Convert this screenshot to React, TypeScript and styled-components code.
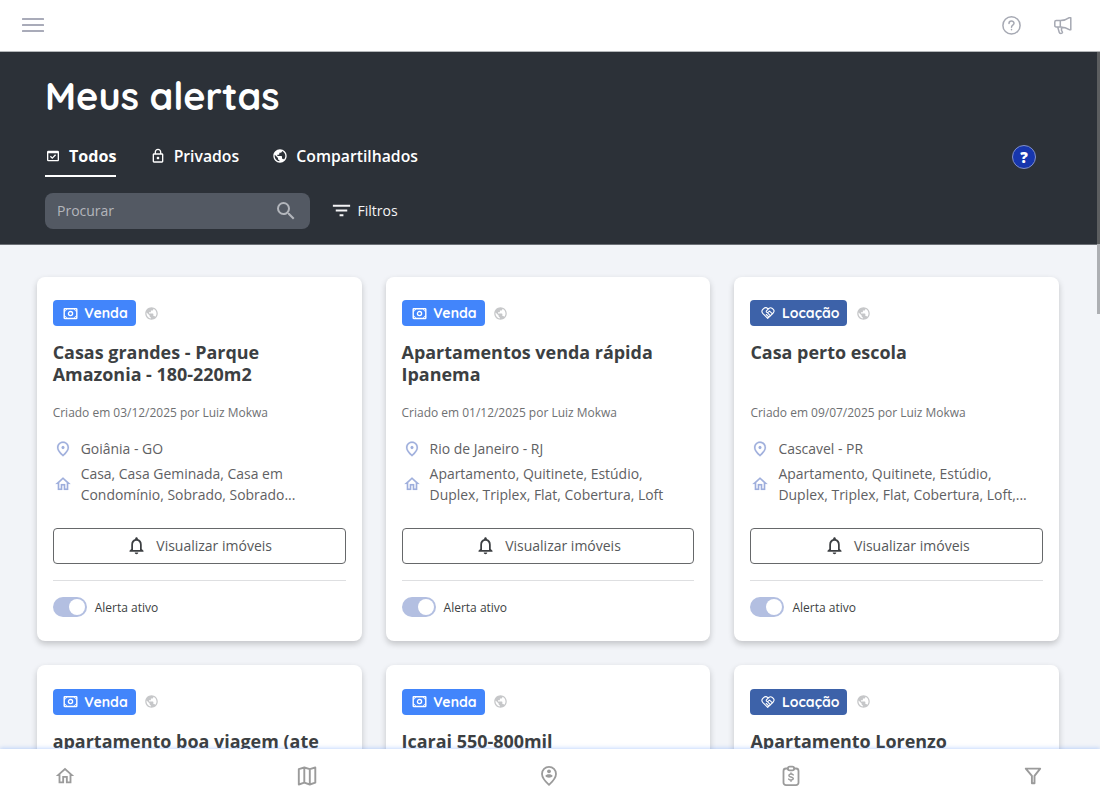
import React from "react";
import styled, { createGlobalStyle } from "styled-components";
import {
  MdFilterList,
  MdNotificationsNone,
  MdOutlineDomainVerification,
  MdOutlineHome,
  MdOutlineLock,
  MdOutlinePlace,
  MdPublic,
  MdSearch,
} from "react-icons/md";

const rounded = `Quicksand, Lato, "Liberation Sans", sans-serif`;

const GlobalStyle = createGlobalStyle`
  * { box-sizing: border-box; }
  body {
    margin: 0;
    overflow: hidden;
    background: #f2f4f8;
    font-family: "Open Sans", "Noto Sans", sans-serif;
    color: #3c3f42;
  }
  button, input { font: inherit; }
  svg { display: block; flex: none; }
  svg path[fill="none"] { stroke: none; }
`;

const Page = styled.div`
  display: grid;
  grid-template-rows: 52px 1fr 51px;
  height: 800px;
  width: 1100px;
`;

const TopBar = styled.header`
  display: flex;
  align-items: center;
  justify-content: space-between;
  padding: 0 27px 1px 22px;
  background: #fff;
  border-bottom: 1px solid #b4b7b9;
  color: #a6a9b3;
`;

const TopActions = styled.div`
  display: flex;
  align-items: center;
  gap: 32px;
`;

const Burger = styled.div`
  display: flex;
  flex-direction: column;
  gap: 4px;
  span {
    width: 22px;
    height: 2px;
    border-radius: 0.5px;
    background: #a9abb9;
  }
`;

const Scroller = styled.main`
  display: grid;
  grid-template-columns: 1097px 3px;
  min-height: 0;
  overflow: hidden;
`;

const Content = styled.div`
  min-width: 0;
`;

const ScrollTrack = styled.div`
  background: linear-gradient(#555759 192px, #f2f4f8 192px);
`;

const ScrollThumb = styled.div`
  height: 262px;
  background: linear-gradient(#5c5e60 192px, #adafb3 192px);
`;

const Hero = styled.section`
  height: 193px;
  padding: 22px 61px 0 45px;
  background: #2c3138;
  color: #fff;
  border-bottom: 1px solid #6c7076;
`;

const Title = styled.h1`
  margin: 0;
  font: 700 37.9px/44px ${rounded};
`;

const TabRow = styled.div`
  display: flex;
  justify-content: space-between;
  margin-top: 18px;
  height: 41px;
`;

const Tabs = styled.nav`
  display: flex;
  gap: 33.2px;
`;

const Tab = styled.div<{ $active?: boolean }>`
  display: flex;
  align-items: center;
  gap: 8px;
  height: 41px;
  font-size: ${(p) => (p.$active ? 16.1 : 15.75)}px;
  font-weight: ${(p) => (p.$active ? 700 : 600)};
  border-bottom: 2px solid ${(p) => (p.$active ? "#fff" : "transparent")};
`;

const HelpBadge = styled.button`
  width: 24px;
  height: 24px;
  margin-top: 9px;
  padding: 0;
  border: 1px solid #8290c6;
  border-radius: 50%;
  background: #1736ad;
  color: #fff;
  font-size: 15px;
  font-weight: 800;
  line-height: 20px;
`;

const Tools = styled.div`
  display: flex;
  align-items: center;
  gap: 20px;
  margin-top: 16px;
`;

const SearchBox = styled.div`
  display: flex;
  align-items: center;
  justify-content: space-between;
  width: 265px;
  height: 36px;
  padding: 0 12px 1px;
  border-radius: 8px;
  background: #535963;
  color: #b3b6bc;
  font-size: 14px;
`;

const FilterButton = styled.div`
  display: flex;
  align-items: center;
  gap: 4.5px;
  padding-bottom: 1px;
  color: #f4f4f5;
  font-size: 14px;
`;

const Grid = styled.section`
  display: grid;
  grid-template-columns: repeat(3, 1fr);
  gap: 24.2px 24px;
  padding: 31.6px 37.7px 0 36.7px;
`;

const Card = styled.article`
  display: flex;
  flex-direction: column;
  height: 364.2px;
  padding: 23.6px 16px 0;
  border-radius: 8px;
  background: #fff;
  box-shadow: 0 3px 6px rgba(0, 0, 0, 0.2);
`;

const TagRow = styled.div`
  display: flex;
  align-items: center;
  gap: 8.5px;
  height: 26px;
  color: #c6c7c9;
`;

const Tag = styled.span<{ $rent?: boolean }>`
  display: flex;
  align-items: center;
  justify-content: space-between;
  width: ${(p) => (p.$rent ? 97 : 83)}px;
  height: 26px;
  padding: 0 8px 0 ${(p) => (p.$rent ? 11 : 10.5)}px;
  border-radius: 4px;
  background: ${(p) => (p.$rent ? "#3d62a9" : "#4285fb")};
  color: #fff;
  font: 700 14px/26px ${rounded};
`;

const CardTitle = styled.h2`
  height: 44px;
  margin: 15px 0 0;
  font-size: 17.95px;
  font-weight: 700;
  line-height: 22px;
`;

const Created = styled.p`
  margin: 18.4px 0 0;
  color: #6e7072;
  font-size: 11.97px;
  line-height: 18px;
`;

const Detail = styled.div<{ $first?: boolean }>`
  display: flex;
  align-items: center;
  gap: 9px;
  margin-top: ${(p) => (p.$first ? 16.6 : 4)}px;
  color: #5f6163;
  font-size: 13.95px;
  line-height: 21px;
  white-space: pre-line;
  svg { color: #9fafdc; margin-left: 1px; stroke: currentColor; stroke-width: 0.2px; }
`;

const ViewButton = styled.button`
  display: flex;
  align-items: center;
  justify-content: center;
  gap: 9px;
  height: 36px;
  margin: 23px 0 16px;
  padding: 0 0 0.5px;
  border: 1px solid #66686a;
  border-radius: 4px;
  background: #fff;
  color: #56585a;
  font-size: 14px;
  svg { color: #3c3f42; }
`;

const Footer = styled.div`
  display: flex;
  align-items: center;
  gap: 8px;
  padding-top: 16px;
  border-top: 1px solid #dedfe1;
  font-size: 12px;
`;

const Toggle = styled.span`
  display: flex;
  justify-content: flex-end;
  width: 34px;
  height: 20px;
  padding: 2px;
  border-radius: 10px;
  background: #b3bfe1;
  &::after {
    content: "";
    width: 16px;
    height: 16px;
    border-radius: 50%;
    background: #fff;
  }
`;

const BottomBar = styled.nav`
  position: relative;
  display: flex;
  align-items: center;
  justify-content: space-between;
  padding: 2px 56px 0 54px;
  background: #fff;
  color: #9b9b9b;
  box-shadow: 0 -1px 4px rgba(66, 133, 251, 0.3);
`;

const line = {
  fill: "none",
  stroke: "currentColor",
  strokeLinecap: "round",
  strokeLinejoin: "round",
} as const;

const HelpIcon = () => (
  <svg width="20" height="20" viewBox="0 0 20 20" {...line} strokeWidth="1.5">
    <circle cx="10.5" cy="10.4" r="8.6" />
    <path d="M8 8.4c0-3.2 5-3.1 5-.2 0 2-2.5 1.9-2.5 4M10.5 14.6v.1" />
  </svg>
);

const MegaphoneIcon = () => (
  <svg width="20" height="20" viewBox="0 0 20 20" {...line} strokeWidth="1.5">
    <path d="M3.2 5.6h4.300c3.500 0 6.200-1 8.800-2.900h1.500v12h-1.500c-2.600-1.900-5.300-2.800-8.800-2.800H3.200c-.9 0-1.400-.6-1.400-1.500V7.100c0-.9.500-1.500 1.400-1.500zM7.300 5.600v6.300M4.700 12l1.500 5.300c.4 1.500 2.900 1.300 3.300.2.200-.7-1-1.400-1-2.300V12" />
  </svg>
);

const CashIcon = () => (
  <svg width="15" height="15" viewBox="0 0 15 15" {...line} strokeWidth="1.4">
    <rect x="1.2" y="2.7" width="12.6" height="9.8" rx="0.5" />
    <circle cx="7.5" cy="7.6" r="2.1" strokeWidth="1.3" />
    <path d="M1.5 5.200c1.200-.2 1.900-.9 2.100-2.100M13.500 5.200c-1.200-.2-1.900-.9-2.100-2.100M1.500 10c1.200.2 1.900.9 2.100 2.100M13.500 10c-1.200.2-1.900.9-2.100 2.100" strokeWidth="1" />
  </svg>
);

const DealIcon = () => (
  <svg width="14" height="14" viewBox="0 0 14 14" {...line} strokeWidth="1.1">
    <path d="M7 2.900C5.700 1.500 3.900 1.400 2.600 2.600L1.600 3.700C.6 5 .7 6.200 1.700 7.300L6.700 12.300 12.200 7c1.100-1.200 1.100-2.500.1-3.600l-1-.9C10.100 1.400 8.900 1.600 7.800 2.500L5.400 4.900c-.6 1.500.9 2 1.800 1.300l1.300-1.100 3 2.700M6.900 7.200l2.600 2.600M5.300 8.500l2.400 2.400" />
  </svg>
);

const MapIcon = () => (
  <svg width="22" height="22" viewBox="0 0 22 22" {...line} strokeWidth="1.9">
    <path d="M2.800 4.100l5.500-1.600 5.500 1.600 5.500-1.600v15.200l-5.500 1.800-5.500-1.800-5.500 1.800zM8.300 2.500v15.200M13.800 4.100v15.400" />
  </svg>
);

const PersonPinIcon = () => (
  <svg width="22" height="22" viewBox="0 0 22 22" {...line} strokeWidth="1.8">
    <path d="M11 19.800C6.600 15.700 4 12.500 4 8.900a7 7 0 0 1 14 0c0 3.600-2.600 6.800-7 10.900z" />
    <circle cx="11" cy="6.300" r="1.900" fill="currentColor" stroke="none" />
    <path d="M7.300 11c.8-2.200 6.600-2.200 7.400 0-1.400 2.200-6 2.200-7.400 0z" fill="currentColor" stroke="none" />
  </svg>
);

const ClipboardIcon = () => (
  <svg width="22" height="22" viewBox="0 0 22 22" {...line} strokeWidth="1.8">
    <path d="M7.800 3.500H6a2.500 2.500 0 0 0-2.500 2.500v11.700a2.500 2.500 0 0 0 2.500 2.500h10a2.500 2.500 0 0 0 2.500-2.500V6a2.500 2.500 0 0 0-2.500-2.500h-1.800" />
    <rect x="7.800" y="1.600" width="6.400" height="3.800" rx="1.900" />
    <path d="M13.200 9.900c-.8-1.200-4.300-1.200-4.300.6 0 2.100 4.400.9 4.400 3.100 0 1.900-3.700 1.700-4.600.5M11 8v1M11 15v1.200" strokeWidth="1.500" />
  </svg>
);

const FunnelIcon = () => (
  <svg width="22" height="22" viewBox="0 0 22 22" {...line} strokeWidth="1.9">
    <path d="M3.800 3.600h14.400l-5.700 7.300v7.300H9.900v-7.300z" />
  </svg>
);

type AlertHead = { rent?: boolean; title: string };

type Alert = AlertHead & {
  date: string;
  place: string;
  kinds: string;
};

const flats = "Apartamento, Quitinete, Estúdio,\nDuplex, Triplex, Flat, Cobertura, Loft";

const alerts: Alert[] = [
  {
    title: "Casas grandes - Parque Amazonia - 180-220m2",
    date: "03/12/2025",
    place: "Goiânia - GO",
    kinds: "Casa, Casa Geminada, Casa em\nCondomínio, Sobrado, Sobrado...",
  },
  { title: "Apartamentos venda rápida Ipanema", date: "01/12/2025", place: "Rio de Janeiro - RJ", kinds: flats },
  { rent: true, title: "Casa perto escola", date: "09/07/2025", place: "Cascavel - PR", kinds: flats + ",..." },
];

const moreAlerts: AlertHead[] = [
  { title: "apartamento boa viagem (ate" },
  { title: "Icarai 550-800mil" },
  { rent: true, title: "Apartamento Lorenzo" },
];

const CardHead = ({ rent, title }: AlertHead) => (
  <>
    <TagRow>
      <Tag $rent={rent}>
        {rent ? <DealIcon /> : <CashIcon />}
        {rent ? "Locação" : "Venda"}
      </Tag>
      <MdPublic size={15} />
    </TagRow>
    <CardTitle>{title}</CardTitle>
  </>
);

const AlertCard = ({ rent, title, date, place, kinds }: Alert) => (
  <Card>
    <CardHead rent={rent} title={title} />
    <Created>Criado em {date} por Luiz Mokwa</Created>
    <Detail $first>
      <MdOutlinePlace size={18} />
      {place}
    </Detail>
    <Detail>
      <MdOutlineHome size={18} />
      {kinds}
    </Detail>
    <ViewButton>
      <MdNotificationsNone size={21} />
      Visualizar imóveis
    </ViewButton>
    <Footer>
      <Toggle />
      Alerta ativo
    </Footer>
  </Card>
);

export default function App() {
  return (
    <Page>
      <GlobalStyle />
      <TopBar>
        <Burger>
          <span />
          <span />
          <span />
        </Burger>
        <TopActions>
          <HelpIcon />
          <MegaphoneIcon />
        </TopActions>
      </TopBar>
      <Scroller>
        <Content>
          <Hero>
            <Title>Meus alertas</Title>
            <TabRow>
              <Tabs>
                <Tab $active>
                  <MdOutlineDomainVerification size={16} />
                  Todos
                </Tab>
                <Tab>
                  <MdOutlineLock size={16} />
                  Privados
                </Tab>
                <Tab>
                  <MdPublic size={16} />
                  Compartilhados
                </Tab>
              </Tabs>
              <HelpBadge>?</HelpBadge>
            </TabRow>
            <Tools>
              <SearchBox>
                Procurar
                <MdSearch size={24} />
              </SearchBox>
              <FilterButton>
                <MdFilterList size={23} />
                Filtros
              </FilterButton>
            </Tools>
          </Hero>
          <Grid>
            {alerts.map((a) => (
              <AlertCard key={a.title} {...a} />
            ))}
            {moreAlerts.map((a) => (
              <Card key={a.title}>
                <CardHead {...a} />
              </Card>
            ))}
          </Grid>
        </Content>
        <ScrollTrack>
          <ScrollThumb />
        </ScrollTrack>
      </Scroller>
      <BottomBar>
        <MdOutlineHome size={22} />
        <MapIcon />
        <PersonPinIcon />
        <ClipboardIcon />
        <FunnelIcon />
      </BottomBar>
    </Page>
  );
}
